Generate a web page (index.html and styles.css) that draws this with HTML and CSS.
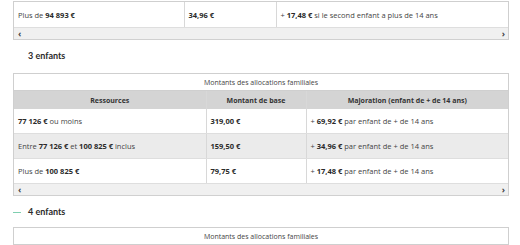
FILE: index.html
```html
<!DOCTYPE html>
<html lang="fr">
<head>
<meta charset="utf-8">
<link rel="stylesheet" href="styles.css">
</head>
<body>
<div class="page">
  <div class="scroller first">
    <table class="tbl t-top">
      <colgroup><col class="c1"><col class="c2"><col class="c3"></colgroup>
      <tbody>
        <tr class="row"><td>Plus de <b>94 893 €</b></td><td><b>34,96 €</b></td><td>+ <b>17,48 €</b> si le second enfant a plus de 14 ans</td></tr>
      </tbody>
    </table>
    <div class="sbar"><span>‹</span><span>›</span></div>
  </div>

  <h3 class="heading">3 enfants</h3>

  <div class="scroller">
    <table class="tbl t-main">
      <colgroup><col class="m1"><col class="m2"><col class="m3"></colgroup>
      <thead>
        <tr class="cap"><th colspan="3">Montants des allocations familiales</th></tr>
        <tr class="head"><th>Ressources</th><th>Montant de base</th><th>Majoration (enfant de + de 14 ans)</th></tr>
      </thead>
      <tbody>
        <tr class="row"><td><b>77 126 €</b> ou moins</td><td><b>319,00 €</b></td><td>+ <b>69,92 €</b> par enfant de + de 14 ans</td></tr>
        <tr class="row alt"><td>Entre <b>77 126 €</b> et <b>100 825 €</b> inclus</td><td><b>159,50 €</b></td><td>+ <b>34,96 €</b> par enfant de + de 14 ans</td></tr>
        <tr class="row"><td>Plus de <b>100 825 €</b></td><td><b>79,75 €</b></td><td>+ <b>17,48 €</b> par enfant de + de 14 ans</td></tr>
      </tbody>
    </table>
    <div class="sbar"><span>‹</span><span>›</span></div>
  </div>

  <h3 class="heading dash">4 enfants</h3>

  <div class="scroller">
    <table class="tbl t-main">
      <colgroup><col class="m1"><col class="m2"><col class="m3"></colgroup>
      <thead>
        <tr class="cap"><th colspan="3">Montants des allocations familiales</th></tr>
      </thead>
    </table>
  </div>
</div>
</body>
</html>
```
FILE: styles.css
```css
html, body {
  margin: 0;
  padding: 0;
  background: #fff;
}
body {
  font-family: "Open Sans", "DejaVu Sans", sans-serif;
  color: #444;
  font-size: 7.5px;
}
.page {
  width: 496px;
  padding-left: 13px;
  padding-top: 1px;
}
.scroller {
  border-left: 1px solid #cfcfcf;
  border-right: 1px solid #cfcfcf;
  border-top: 1px solid #cfcfcf;
}
.tbl {
  width: 100%;
  border-collapse: collapse;
  table-layout: fixed;
}
.tbl td, .tbl th {
  padding: 0 0 0 4px;
  text-align: left;
  font-weight: normal;
  white-space: nowrap;
}
.tbl td + td, .tbl .head th + th {
  border-left: 1px solid #d8d8d8;
}
.tbl b { font-weight: 700; color: #2a2a2a; }
.t-top .c1 { width: 170px; }
.t-top .c2 { width: 92px; }
.t-main .m1 { width: 192px; }
.t-main .m2 { width: 100px; }
.row td { height: 24px; border-bottom: 1px solid #dedede; }
.row.alt td { background: #ebebeb; }
.first .row td { height: 25px; }
.cap th {
  height: 16px;
  text-align: center;
  padding: 0;
  font-size: 7px;
  border-bottom: 1px solid #cfcfcf;
}
.head th {
  height: 18px;
  background: #d4d4d4;
  text-align: center;
  font-weight: 700;
  font-size: 7px;
  padding: 0;
  color: #333;
}
.sbar {
  height: 11px;
  background: #f0f0f0;
  border-bottom: 1px solid #d0d0d0;
  display: flex;
  justify-content: space-between;
  align-items: center;
  padding: 0 3px 0 4px;
  font-size: 9px;
  line-height: 11px;
  color: #444;
  font-weight: 700;
}
.heading {
  margin: 10px 0 11px 0;
  height: 12px;
  line-height: 12px;
  font-family: "Lato", "Open Sans", sans-serif;
  font-size: 9px;
  font-weight: 700;
  color: #2b2b2b;
  padding-left: 15px;
  position: relative;
}
.heading.dash::before {
  content: "";
  position: absolute;
  left: 0;
  top: 6px;
  width: 8px;
  height: 1px;
  background: #7fcfb0;
}
.heading.dash { margin-bottom: 9px; }
```
